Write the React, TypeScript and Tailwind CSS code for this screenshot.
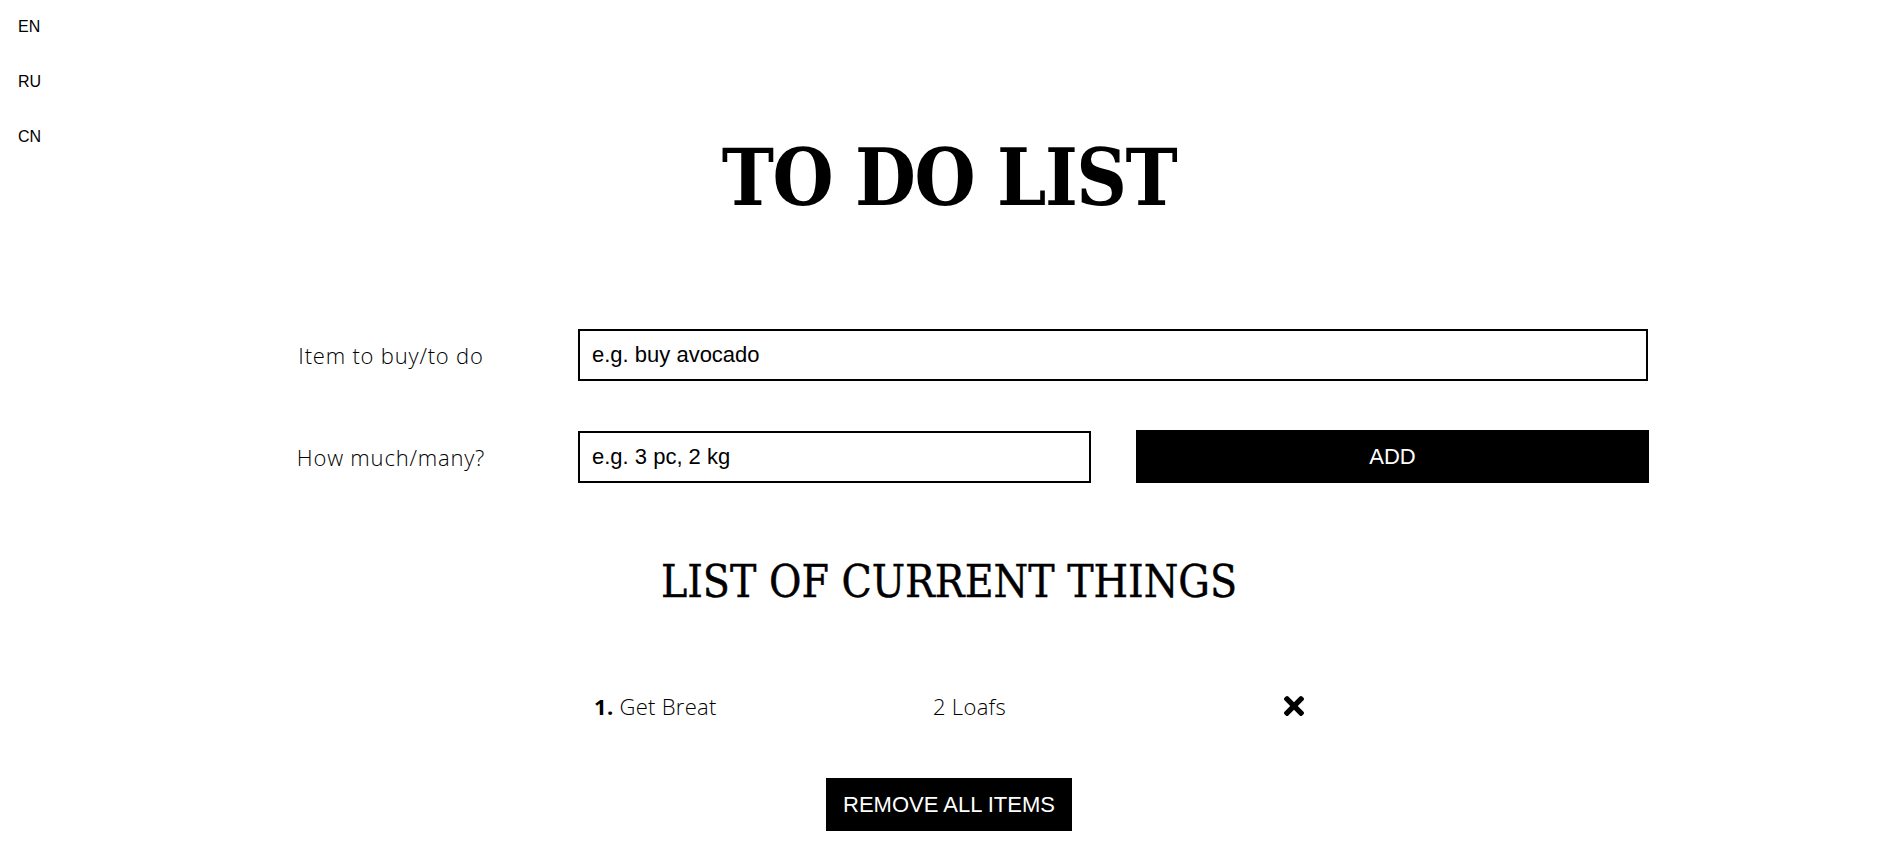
import React from "react";

function TimesIcon() {
  return (
    <svg width="20" height="20" viewBox="0 80 352 352" aria-hidden="true">
      <path
        fill="#000"
        d="M242.72 256l100.07-100.07c12.28-12.28 12.28-32.19 0-44.48l-22.24-22.24c-12.28-12.28-32.19-12.28-44.48 0L176 189.28 75.93 89.21c-12.28-12.28-32.19-12.28-44.48 0L9.21 111.45c-12.28 12.28-12.28 32.19 0 44.48L109.28 256 9.21 356.07c-12.28 12.28-12.28 32.19 0 44.48l22.24 22.24c12.28 12.28 32.2 12.28 44.48 0L176 322.72l100.07 100.07c12.28 12.28 32.2 12.28 44.48 0l22.24-22.24c12.28-12.28 12.28-32.19 0-44.48L242.72 256z"
      />
    </svg>
  );
}

export default function App() {
  return (
    <div className="relative min-h-screen bg-white text-black">
      <nav className="absolute left-[18px] top-[15px] flex flex-col gap-[31px] font-['Liberation_Sans',Arial,sans-serif] text-[16px] leading-[24px]">
        <a href="#">EN</a>
        <a href="#">RU</a>
        <a href="#">CN</a>
      </nav>

      <main className="flex flex-col items-center pt-[139px]">
        <h1 className="font-['DejaVu_Serif_Condensed','DejaVu_Serif',serif] font-stretch-condensed text-[78px] font-bold leading-none tracking-[-1.5px]">
          TO DO LIST
        </h1>

        <form
          className="mt-[112px] flex w-full flex-col gap-[49px] pl-[204px]"
          onSubmit={(e) => e.preventDefault()}
        >
          <div className="flex items-center">
            <label className="w-[374px] text-center font-['Open_Sans',sans-serif] text-[22px] font-light leading-[30px] tracking-[0.8px]">
              Item to buy/to do
            </label>
            <input
              type="text"
              placeholder="e.g. buy avocado"
              className="h-[52px] w-[1070px] border-2 border-black px-[12px] font-['Liberation_Sans',Arial,sans-serif] text-[22px] outline-none placeholder:text-black"
            />
          </div>
          <div className="flex items-center">
            <label className="w-[374px] text-center font-['Open_Sans',sans-serif] text-[22px] font-light leading-[30px] tracking-[0.8px]">
              How much/many?
            </label>
            <input
              type="text"
              placeholder="e.g. 3 pc, 2 kg"
              className="h-[52px] w-[513px] border-2 border-black px-[12px] font-['Liberation_Sans',Arial,sans-serif] text-[22px] outline-none placeholder:text-black"
            />
            <button
              type="submit"
              className="ml-[45px] h-[53px] w-[513px] bg-black font-['Liberation_Sans',Arial,sans-serif] text-[22px] text-white"
            >
              ADD
            </button>
          </div>
        </form>

        <h2 className="mt-[77px] font-['DejaVu_Serif_Condensed','DejaVu_Serif',serif] font-stretch-condensed text-[44px] font-normal leading-none [-webkit-text-stroke:0.4px_black]">
          LIST OF CURRENT THINGS
        </h2>

        <ul className="mt-[87px] flex flex-col">
          <li className="flex items-center font-['Open_Sans',sans-serif] text-[22px] font-light leading-[30px] tracking-[0.3px]">
            <span className="w-[339px]">
              <b className="font-bold">1.</b> Get Breat
            </span>
            <span className="w-[350px]">2 Loafs</span>
            <button type="button" className="flex w-[21px] items-center justify-center">
              <TimesIcon />
            </button>
          </li>
        </ul>

        <button
          type="button"
          className="mt-[57px] h-[53px] bg-black px-[17px] font-['Liberation_Sans',Arial,sans-serif] text-[22px] text-white"
        >
          REMOVE ALL ITEMS
        </button>
      </main>
    </div>
  );
}
